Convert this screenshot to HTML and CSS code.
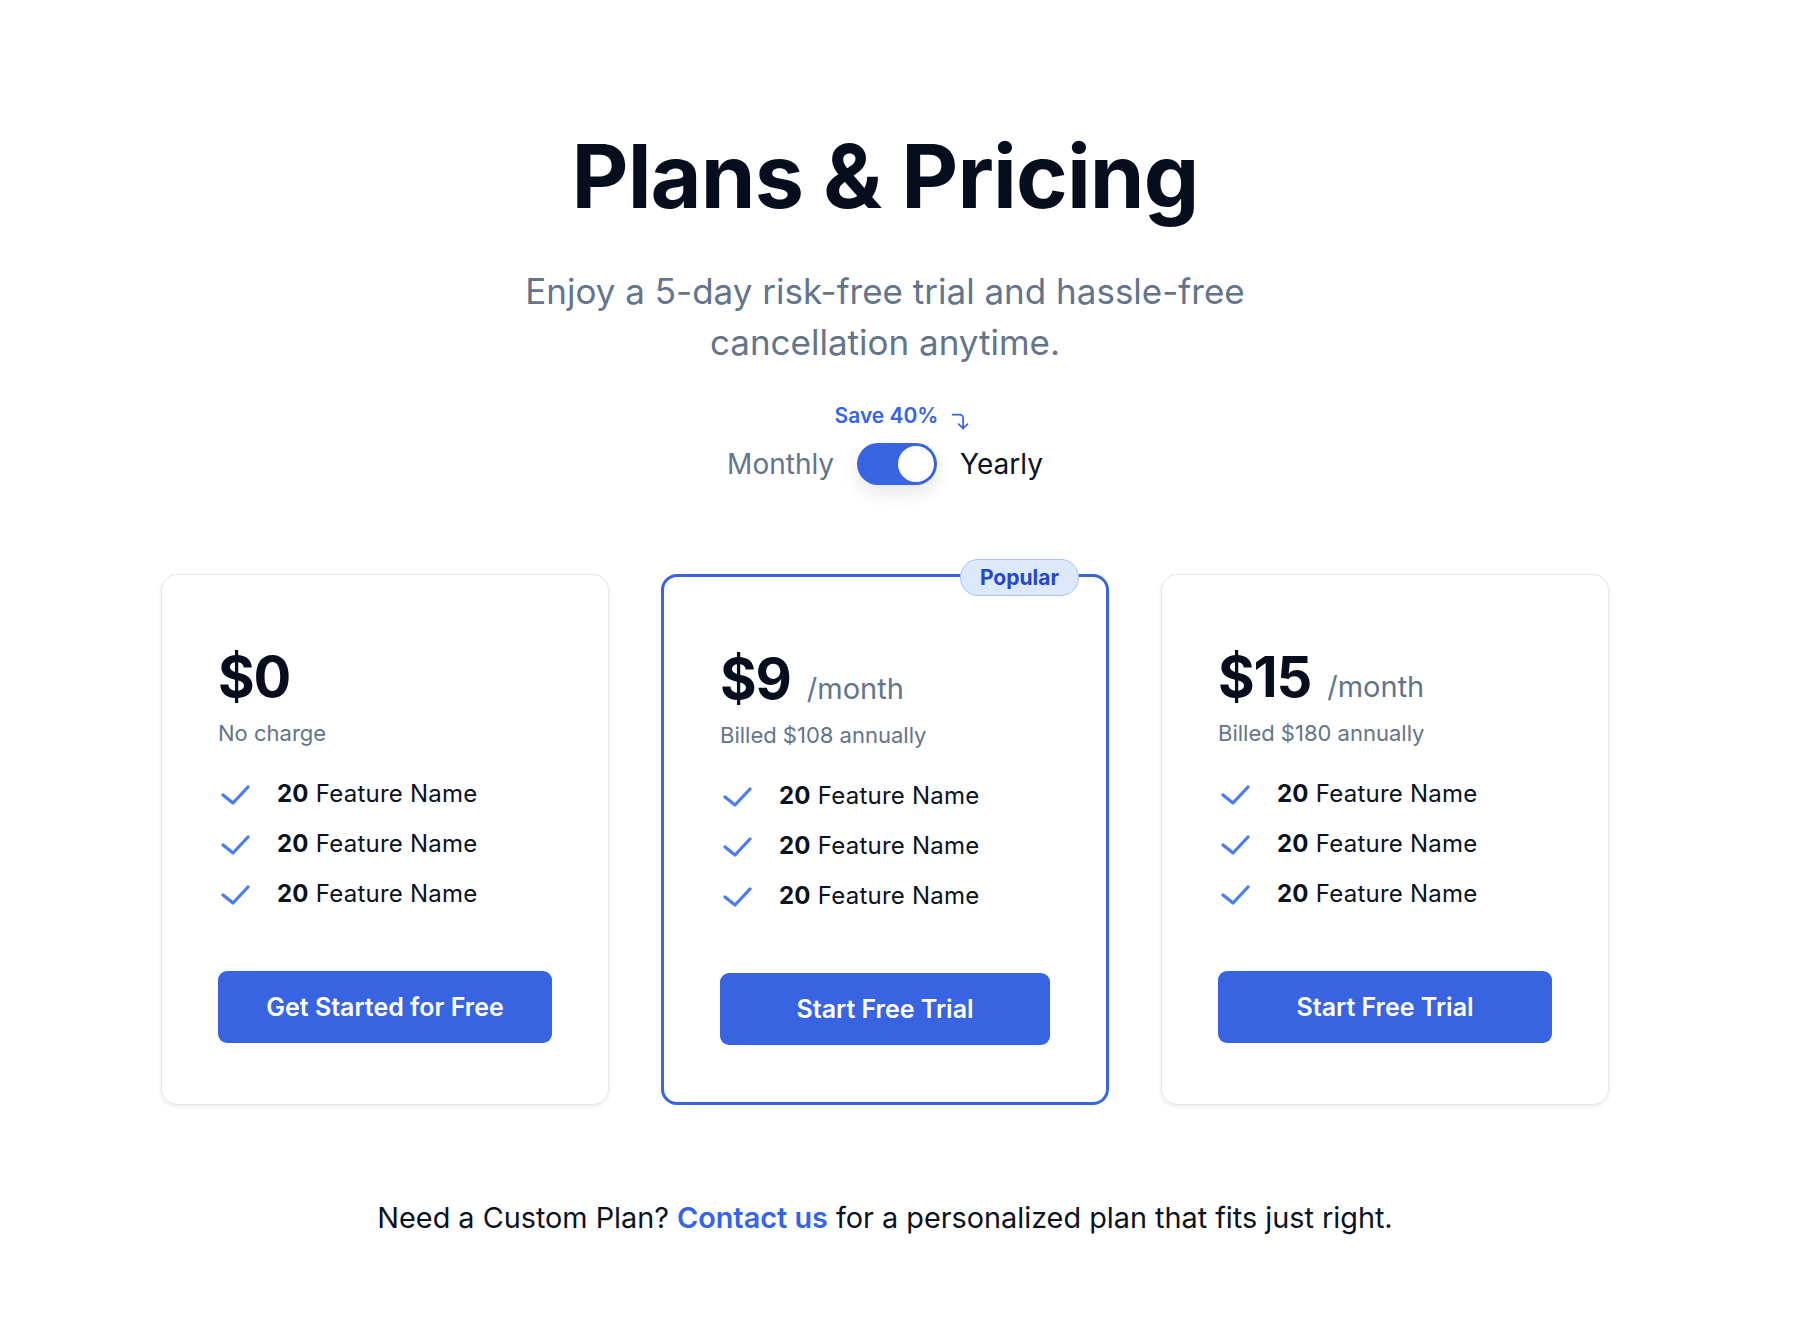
FILE: index.html
```html
<!DOCTYPE html>
<html lang="en">
<head>
    <meta charset="UTF-8">
    <meta name="viewport" content="width=device-width, initial-scale=1.0">
    <title>Plans &amp; Pricing</title>
    <link rel="stylesheet" href="styles.css">
</head>
<body>

    <main class="page">
        <h1 class="title">Plans &amp; Pricing</h1>

        <p class="subtitle">Enjoy a 5-day risk-free trial and hassle-free cancellation anytime.</p>

        <div class="save">
            <span>Save 40%</span>
            <svg class="save-arrow" width="21" height="21" viewBox="0 0 24 24" fill="none" stroke="currentColor" stroke-width="2" stroke-linecap="round" stroke-linejoin="round">
                <path d="M3 4h8a4 4 0 0 1 4 4v12"/>
                <polyline points="10 15 15 20 20 15"/>
            </svg>
        </div>

        <div class="billing">
            <span class="billing-label muted">Monthly</span>
            <div class="switch"><div class="knob"></div></div>
            <span class="billing-label">Yearly</span>
        </div>

        <section class="plans">
            <div class="card">
                <div class="price"><span class="amount">$0</span></div>
                <p class="billed">No charge</p>
                <ul class="features">
                    <li><svg class="check" width="32" height="24" viewBox="0 0 32 24"><path d="M5 13l10 8L30 5"/></svg><span><b>20</b> Feature Name</span></li>
                    <li><svg class="check" width="32" height="24" viewBox="0 0 32 24"><path d="M5 13l10 8L30 5"/></svg><span><b>20</b> Feature Name</span></li>
                    <li><svg class="check" width="32" height="24" viewBox="0 0 32 24"><path d="M5 13l10 8L30 5"/></svg><span><b>20</b> Feature Name</span></li>
                </ul>
                <button class="cta">Get Started for Free</button>
            </div>

            <div class="card popular">
                <span class="badge">Popular</span>
                <div class="price"><span class="amount">$9</span><span class="per">/month</span></div>
                <p class="billed">Billed $108 annually</p>
                <ul class="features">
                    <li><svg class="check" width="32" height="24" viewBox="0 0 32 24"><path d="M5 13l10 8L30 5"/></svg><span><b>20</b> Feature Name</span></li>
                    <li><svg class="check" width="32" height="24" viewBox="0 0 32 24"><path d="M5 13l10 8L30 5"/></svg><span><b>20</b> Feature Name</span></li>
                    <li><svg class="check" width="32" height="24" viewBox="0 0 32 24"><path d="M5 13l10 8L30 5"/></svg><span><b>20</b> Feature Name</span></li>
                </ul>
                <button class="cta">Start Free Trial</button>
            </div>

            <div class="card">
                <div class="price"><span class="amount">$15</span><span class="per">/month</span></div>
                <p class="billed">Billed $180 annually</p>
                <ul class="features">
                    <li><svg class="check" width="32" height="24" viewBox="0 0 32 24"><path d="M5 13l10 8L30 5"/></svg><span><b>20</b> Feature Name</span></li>
                    <li><svg class="check" width="32" height="24" viewBox="0 0 32 24"><path d="M5 13l10 8L30 5"/></svg><span><b>20</b> Feature Name</span></li>
                    <li><svg class="check" width="32" height="24" viewBox="0 0 32 24"><path d="M5 13l10 8L30 5"/></svg><span><b>20</b> Feature Name</span></li>
                </ul>
                <button class="cta">Start Free Trial</button>
            </div>
        </section>

        <p class="custom">Need a Custom Plan? <a href="#">Contact us</a> for a personalized plan that fits just right.</p>
    </main>

</body>
</html>
```

FILE: styles.css
```css
body {
    margin: 0;
    background-color: #ffffff;
    color: #0b1220;
    font-family: Inter, 'Noto Sans', sans-serif;
}

.page {
    display: flex;
    flex-direction: column;
    align-items: center;
    padding: 124px 203px 0 161px;
}

.title {
    margin: 0;
    font-size: 88px;
    font-weight: 700;
    line-height: 1.2;
    letter-spacing: -0.01em;
    color: #060d1c;
}

.subtitle {
    margin: 36px 0 0;
    max-width: 780px;
    font-size: 35px;
    line-height: 51px;
    color: #64748b;
    text-align: center;
}

.save {
    display: flex;
    align-items: center;
    gap: 12px;
    margin-top: 33px;
    padding-left: 36px;
    font-size: 21px;
    font-weight: 600;
    line-height: 26px;
    color: #3563e9;
}

.save-arrow {
    margin-top: 10px;
}

.billing {
    display: flex;
    align-items: center;
    gap: 23px;
    margin-top: 11px;
}

.billing-label {
    font-size: 28px;
    color: #0b1220;
}

.billing-label.muted {
    color: #64748b;
}

.switch {
    display: flex;
    justify-content: flex-end;
    box-sizing: border-box;
    width: 80px;
    height: 42px;
    padding: 3px;
    border-radius: 21px;
    background-color: #3864e2;
    box-shadow: 0 8px 18px rgba(15, 23, 42, 0.1);
}

.knob {
    width: 36px;
    height: 36px;
    border-radius: 50%;
    background-color: #ffffff;
}

.plans {
    display: grid;
    grid-template-columns: repeat(3, 1fr);
    gap: 52px;
    width: 100%;
    margin-top: 89px;
}

.card {
    position: relative;
    display: flex;
    flex-direction: column;
    align-items: flex-start;
    padding: 70px 56px 61px;
    border: 1px solid #e5e7eb;
    border-radius: 16px;
    background-color: #ffffff;
    box-shadow: 0 2px 5px rgba(15, 23, 42, 0.07);
}

.card.popular {
    padding-bottom: 57px;
    border: 3px solid #3864e2;
    box-shadow: none;
}

.badge {
    position: absolute;
    top: -18px;
    right: 27px;
    padding: 0 19px;
    height: 35px;
    line-height: 35px;
    border: 1px solid #aac4f3;
    border-radius: 18px;
    background-color: #dce8fc;
    color: #2748c8;
    font-size: 21px;
    font-weight: 700;
}

.price {
    display: flex;
    align-items: baseline;
    gap: 16px;
    height: 64px;
}

.amount {
    font-size: 56px;
    font-weight: 700;
    line-height: 64px;
    letter-spacing: -0.02em;
    color: #060d1c;
}

.per {
    font-size: 29px;
    line-height: 1;
    color: #64748b;
}

.billed {
    margin: 10px 0 0;
    font-size: 22px;
    line-height: 28px;
    color: #64748b;
}

.features {
    display: flex;
    flex-direction: column;
    gap: 16px;
    margin: 30px 0 0;
    padding: 0;
    list-style: none;
}

.features li {
    display: flex;
    align-items: center;
    gap: 27px;
    font-size: 24px;
    line-height: 34px;
    letter-spacing: 0.01em;
}

.features b {
    font-weight: 700;
}

.check {
    fill: none;
    stroke: #4a7cf0;
    stroke-width: 3.2;
    stroke-linecap: round;
    stroke-linejoin: round;
}

.cta {
    width: 100%;
    height: 72px;
    margin-top: 60px;
    border: none;
    border-radius: 9px;
    background-color: #3864e2;
    color: #ffffff;
    font-family: inherit;
    font-size: 25px;
    font-weight: 600;
    cursor: pointer;
}

.custom {
    margin: 92px 0 0;
    font-size: 28.8px;
    line-height: 42px;
    color: #0b1220;
}

.custom a {
    color: #3563e9;
    font-weight: 600;
    text-decoration: none;
}
```
